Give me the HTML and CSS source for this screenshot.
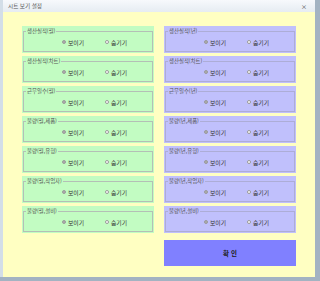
FILE: index.html
```html
<!DOCTYPE html>
<html lang="ko">
<head>
    <meta charset="UTF-8">
    <meta name="viewport" content="width=device-width, initial-scale=1.0">
    <title>시트 보기 설정</title>
    <link rel="stylesheet" href="styles.css">
</head>
<body>

<div class="window">
    <div class="titlebar">
        <span class="title">시트 보기 설정</span>
        <span class="close">×</span>
    </div>

    <div class="content">
        <div class="col month">
            <div class="group"><fieldset><legend>생산실적(월)</legend>
                <div class="opts"><label class="opt"><input type="radio" name="m1" checked>보이기</label><label class="opt"><input type="radio" name="m1">숨기기</label></div>
            </fieldset></div>
            <div class="group"><fieldset><legend>생산실적(차트)</legend>
                <div class="opts"><label class="opt"><input type="radio" name="m2" checked>보이기</label><label class="opt"><input type="radio" name="m2">숨기기</label></div>
            </fieldset></div>
            <div class="group"><fieldset><legend>근무일수(월)</legend>
                <div class="opts"><label class="opt"><input type="radio" name="m3" checked>보이기</label><label class="opt"><input type="radio" name="m3">숨기기</label></div>
            </fieldset></div>
            <div class="group"><fieldset><legend>불량(월,제품)</legend>
                <div class="opts"><label class="opt"><input type="radio" name="m4" checked>보이기</label><label class="opt"><input type="radio" name="m4">숨기기</label></div>
            </fieldset></div>
            <div class="group"><fieldset><legend>불량(월,유형)</legend>
                <div class="opts"><label class="opt"><input type="radio" name="m5" checked>보이기</label><label class="opt"><input type="radio" name="m5">숨기기</label></div>
            </fieldset></div>
            <div class="group"><fieldset><legend>불량(월,작업자)</legend>
                <div class="opts"><label class="opt"><input type="radio" name="m6" checked>보이기</label><label class="opt"><input type="radio" name="m6">숨기기</label></div>
            </fieldset></div>
            <div class="group"><fieldset><legend>불량(월,설비)</legend>
                <div class="opts"><label class="opt"><input type="radio" name="m7" checked>보이기</label><label class="opt"><input type="radio" name="m7">숨기기</label></div>
            </fieldset></div>
        </div>

        <div class="col year">
            <div class="group"><fieldset><legend>생산실적(년)</legend>
                <div class="opts"><label class="opt"><input type="radio" name="y1" checked>보이기</label><label class="opt"><input type="radio" name="y1">숨기기</label></div>
            </fieldset></div>
            <div class="group"><fieldset><legend>생산실적(차트)</legend>
                <div class="opts"><label class="opt"><input type="radio" name="y2" checked>보이기</label><label class="opt"><input type="radio" name="y2">숨기기</label></div>
            </fieldset></div>
            <div class="group"><fieldset><legend>근무일수(년)</legend>
                <div class="opts"><label class="opt"><input type="radio" name="y3" checked>보이기</label><label class="opt"><input type="radio" name="y3">숨기기</label></div>
            </fieldset></div>
            <div class="group"><fieldset><legend>불량(년,제품)</legend>
                <div class="opts"><label class="opt"><input type="radio" name="y4" checked>보이기</label><label class="opt"><input type="radio" name="y4">숨기기</label></div>
            </fieldset></div>
            <div class="group"><fieldset><legend>불량(년,유형)</legend>
                <div class="opts"><label class="opt"><input type="radio" name="y5" checked>보이기</label><label class="opt"><input type="radio" name="y5">숨기기</label></div>
            </fieldset></div>
            <div class="group"><fieldset><legend>불량(년,작업자)</legend>
                <div class="opts"><label class="opt"><input type="radio" name="y6" checked>보이기</label><label class="opt"><input type="radio" name="y6">숨기기</label></div>
            </fieldset></div>
            <div class="group"><fieldset><legend>불량(년,설비)</legend>
                <div class="opts"><label class="opt"><input type="radio" name="y7" checked>보이기</label><label class="opt"><input type="radio" name="y7">숨기기</label></div>
            </fieldset></div>
            <button class="ok-btn">확 인</button>
        </div>
    </div>
</div>

</body>
</html>
```

FILE: styles.css
```css
html, body { margin: 0; height: 100%; }
body { background: #a3b3c2; font-family: "Noto Sans CJK KR", "Noto Sans", sans-serif; color: #333; }
.window { width: 315px; height: 277px; box-sizing: border-box; border-left: 3px solid #d3dee8; background: #ffffc2; display: flex; flex-direction: column; }
.titlebar { height: 12px; background: linear-gradient(#f7f9fc, #e6ecf2); display: flex; align-items: center; justify-content: space-between; padding: 0 8px 0 5px; }
.title { font-size: 5.6px; color: #555; }
.close { font-size: 6px; color: #444; }
.content { display: flex; gap: 10px; padding: 14px 19px 0 19px; }
.col { width: 132px; display: flex; flex-direction: column; gap: 3px; }
.group { height: 27px; box-sizing: border-box; padding: 1px 1px 1px 1px; }
.month .group { background: #c2fcc2; }
.year .group { background: #c0c0fc; }
fieldset { margin: 0; padding: 0; height: 25px; box-sizing: border-box; border: 1px solid #b4bfb6; }
.year fieldset { border-color: #adadd6; }
legend { font-size: 5.4px; line-height: 8px; padding: 0 1px; margin-left: 2px; color: #555; }
.opts { display: flex; align-items: center; height: 14px; padding-left: 38px; }
.opt { display: flex; align-items: center; width: 43px; font-size: 5.8px; color: #333; }
.opt input { appearance: none; margin: 0 2px 0 0; width: 4px; height: 4px; border: 1px solid #999; border-radius: 50%; background: #fff; box-sizing: border-box; }
.opt input:checked { background: radial-gradient(#333 0, #333 35%, #fff 60%); }
.ok-btn { margin-top: 4px; height: 26px; border: none; background: #8080ff; font-family: inherit; font-size: 6.5px; font-weight: bold; color: #222; }
```
